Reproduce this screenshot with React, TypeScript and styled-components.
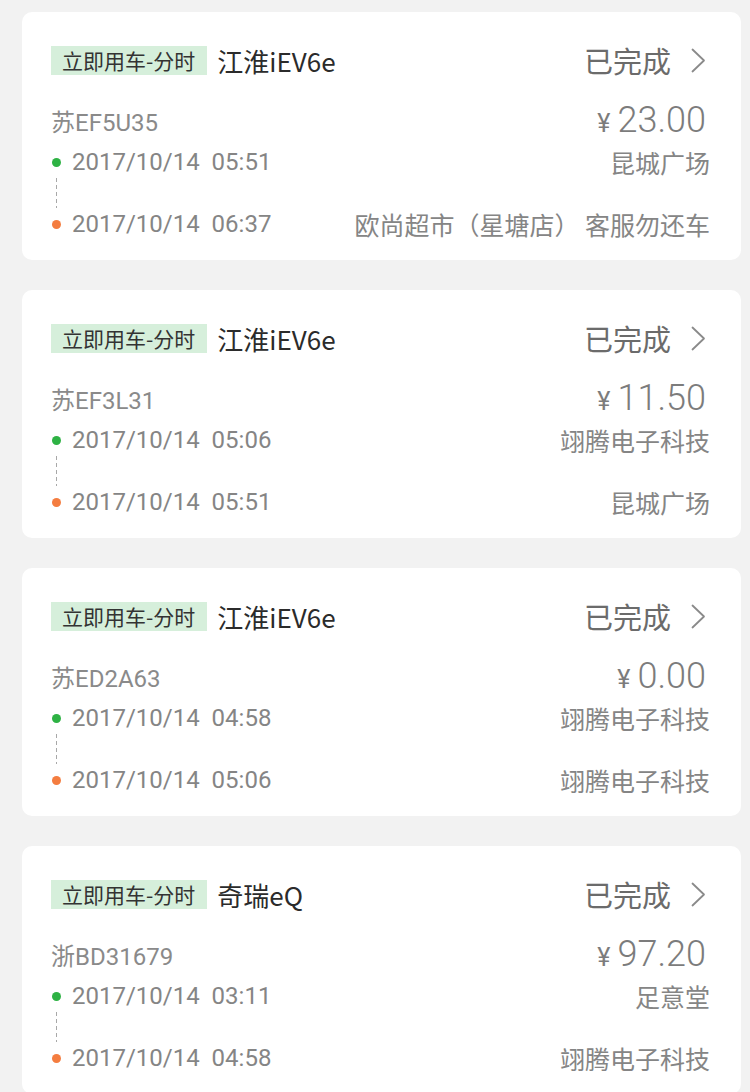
import React from 'react'
import styled, { createGlobalStyle } from 'styled-components'

const GlobalStyle = createGlobalStyle`
  html, body {
    margin: 0;
    padding: 0;
    background: #f2f2f2;
  }
  body {
    font-family: Roboto, "Noto Sans CJK SC", sans-serif;
    -webkit-font-smoothing: antialiased;
  }
`

const cjk = `"Noto Sans CJK SC", "Noto Sans", sans-serif`
const latin = `Roboto, "Noto Sans CJK SC", sans-serif`

interface Order {
  kind: string
  model: string
  status: string
  plate: string
  price: string
  startTime: string
  startPlace: string
  endTime: string
  endPlace: string
}

const orders: Order[] = [
  {
    kind: '立即用车-分时',
    model: '江淮iEV6e',
    status: '已完成',
    plate: '苏EF5U35',
    price: '23.00',
    startTime: '2017/10/14  05:51',
    startPlace: '昆城广场',
    endTime: '2017/10/14  06:37',
    endPlace: '欧尚超市（星塘店） 客服勿还车',
  },
  {
    kind: '立即用车-分时',
    model: '江淮iEV6e',
    status: '已完成',
    plate: '苏EF3L31',
    price: '11.50',
    startTime: '2017/10/14  05:06',
    startPlace: '翊腾电子科技',
    endTime: '2017/10/14  05:51',
    endPlace: '昆城广场',
  },
  {
    kind: '立即用车-分时',
    model: '江淮iEV6e',
    status: '已完成',
    plate: '苏ED2A63',
    price: '0.00',
    startTime: '2017/10/14  04:58',
    startPlace: '翊腾电子科技',
    endTime: '2017/10/14  05:06',
    endPlace: '翊腾电子科技',
  },
  {
    kind: '立即用车-分时',
    model: '奇瑞eQ',
    status: '已完成',
    plate: '浙BD31679',
    price: '97.20',
    startTime: '2017/10/14  03:11',
    startPlace: '足意堂',
    endTime: '2017/10/14  04:58',
    endPlace: '翊腾电子科技',
  },
]

const List = styled.div`
  display: flex;
  flex-direction: column;
  gap: 30px;
  padding: 12px 9px 30px 22px;
`

const Card = styled.div`
  background: #ffffff;
  border-radius: 10px;
  padding: 30px 31px 21px 29px;
  display: flex;
  flex-direction: column;
`

const Header = styled.div`
  height: 36px;
  display: flex;
  align-items: center;
`

const Tag = styled.span`
  height: 29px;
  padding: 0 12px 0 11px;
  display: inline-flex;
  align-items: center;
  background: #d6efdb;
  color: #333;
  font-family: ${cjk};
  font-size: 21px;
  white-space: nowrap;
`

const Model = styled.span`
  margin-left: 10px;
  color: #2b2b2b;
  font-family: ${cjk};
  font-size: 26px;
  flex: 1;
`

const Status = styled.span`
  display: flex;
  align-items: center;
  gap: 20px;
  margin-right: 4px;
  color: #6b6b6b;
  font-family: ${cjk};
  font-size: 29px;
`

const InfoRow = styled.div`
  margin-top: 22px;
  height: 40px;
  display: flex;
  align-items: center;
  justify-content: space-between;
`

const Plate = styled.span`
  color: #8a8a8a;
  font-family: ${latin};
  font-size: 24px;
`

const Price = styled.span`
  display: flex;
  align-items: baseline;
  gap: 7px;
  color: #7c7c7c;
  font-family: ${latin};
  font-weight: 300;
  font-size: 36px;
  margin-right: 4px;
`

const Yen = styled.span`
  font-size: 25px;
  font-weight: 400;
`

const Timeline = styled.div`
  margin-top: 7px;
  display: flex;
  flex-direction: column;
`

const Stop = styled.div`
  height: 30px;
  display: flex;
  align-items: center;
`

const Dot = styled.span<{ $color: string }>`
  width: 9px;
  height: 9px;
  border-radius: 50%;
  background: ${({ $color }) => $color};
  margin-left: 1px;
  flex-shrink: 0;
`

const Time = styled.span`
  margin-left: 11px;
  color: #858585;
  font-family: ${latin};
  font-size: 24px;
  white-space: pre;
  flex: 1;
`

const Place = styled.span`
  color: #858585;
  font-family: ${cjk};
  font-size: 25px;
  white-space: pre;
`

const Connector = styled.div`
  width: 1px;
  height: 30px;
  margin: 1px 0 1px 5px;
  background: repeating-linear-gradient(to bottom, #a8a8a8 0 4px, transparent 4px 7px);
`

const Chevron = () => (
  <svg width="15" height="25" viewBox="0 0 15 25" fill="none">
    <polyline points="1.5,1.5 13,12.5 1.5,23.5" stroke="#8a8a8a" strokeWidth="1.8" strokeLinecap="round" strokeLinejoin="round" />
  </svg>
)

const OrderCard: React.FC<{ order: Order }> = ({ order }) => (
  <Card>
    <Header>
      <Tag>{order.kind}</Tag>
      <Model>{order.model}</Model>
      <Status>
        {order.status}
        <Chevron />
      </Status>
    </Header>
    <InfoRow>
      <Plate>{order.plate}</Plate>
      <Price>
        <Yen>¥</Yen>
        {order.price}
      </Price>
    </InfoRow>
    <Timeline>
      <Stop>
        <Dot $color="#2eb244" />
        <Time>{order.startTime}</Time>
        <Place>{order.startPlace}</Place>
      </Stop>
      <Connector />
      <Stop>
        <Dot $color="#f47d40" />
        <Time>{order.endTime}</Time>
        <Place>{order.endPlace}</Place>
      </Stop>
    </Timeline>
  </Card>
)

export default function App() {
  return (
    <>
      <GlobalStyle />
      <List>
        {orders.map((o, i) => (
          <OrderCard order={o} key={`order-${i}`} />
        ))}
      </List>
    </>
  )
}
